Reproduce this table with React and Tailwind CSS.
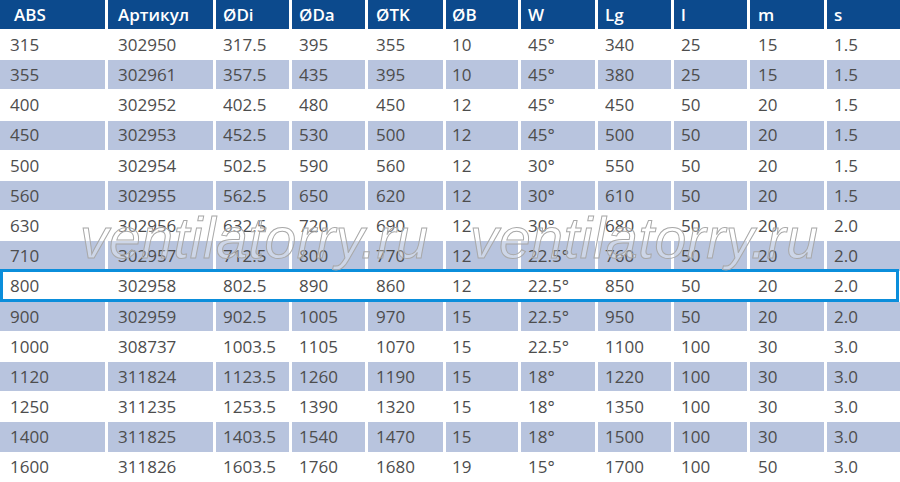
import React from "react";

const headers = ["ABS", "Артикул", "ØDi", "ØDa", "ØTK", "ØB", "W", "Lg", "l", "m", "s"];
const rows = [
  ["315", "302950", "317.5", "395", "355", "10", "45°", "340", "25", "15", "1.5"],
  ["355", "302961", "357.5", "435", "395", "10", "45°", "380", "25", "15", "1.5"],
  ["400", "302952", "402.5", "480", "450", "12", "45°", "450", "50", "20", "1.5"],
  ["450", "302953", "452.5", "530", "500", "12", "45°", "500", "50", "20", "1.5"],
  ["500", "302954", "502.5", "590", "560", "12", "30°", "550", "50", "20", "1.5"],
  ["560", "302955", "562.5", "650", "620", "12", "30°", "610", "50", "20", "1.5"],
  ["630", "302956", "632.5", "720", "690", "12", "30°", "680", "50", "20", "2.0"],
  ["710", "302957", "712.5", "800", "770", "12", "22.5°", "760", "50", "20", "2.0"],
  ["800", "302958", "802.5", "890", "860", "12", "22.5°", "850", "50", "20", "2.0"],
  ["900", "302959", "902.5", "1005", "970", "15", "22.5°", "950", "50", "20", "2.0"],
  ["1000", "308737", "1003.5", "1105", "1070", "15", "22.5°", "1100", "100", "30", "3.0"],
  ["1120", "311824", "1123.5", "1260", "1190", "15", "18°", "1220", "100", "30", "3.0"],
  ["1250", "311235", "1253.5", "1390", "1320", "15", "18°", "1350", "100", "30", "3.0"],
  ["1400", "311825", "1403.5", "1540", "1470", "15", "18°", "1500", "100", "30", "3.0"],
  ["1600", "311826", "1603.5", "1760", "1680", "19", "15°", "1700", "100", "50", "3.0"],
];

const pads = [
  "pl-[10px]", "pl-[10px]", "pl-[7px]", "pl-[7px]", "pl-[8px]", "pl-[6px]",
  "pl-[7px]", "pl-[7px]", "pl-[7px]", "pl-[8px]", "pl-[7px]",
];

const gridCls =
  "grid grid-cols-[105px_105px_73px_73px_75px_72px_74px_73px_73px_74px_1fr] gap-x-[3px]";

function Watermark({ className }) {
  return (
    <div
      className={
        "absolute whitespace-nowrap italic text-[57px] leading-none tracking-[0.5px] text-white/30 [-webkit-text-stroke:1px_#a8a8a8] font-['Liberation_Sans',sans-serif] " +
        className
      }
    >
      ventilatorry.ru
    </div>
  );
}

export default function App() {
  return (
    <div className="relative w-[900px] h-[482px] bg-white overflow-hidden font-['Open_Sans',sans-serif] text-[17px] text-[#4d4d4d]">
      <div className={gridCls + " h-[29px]"}>
        {headers.map((h, i) => (
          <div
            key={i}
            className={
              "bg-[#0c4a8d] text-white font-semibold flex items-center " +
              (i === 0 ? "pl-[14px]" : pads[i])
            }
          >
            {h}
          </div>
        ))}
      </div>
      <div className="flex flex-col gap-y-[1px] pt-[1px]">
        {rows.map((r, ri) => {
          const blue = ri % 2 === 1;
          return (
            <div key={ri} className={"relative " + gridCls + " h-[29.2px]"}>
              {r.map((c, ci) => (
                <div
                  key={ci}
                  className={
                    "flex items-center " + pads[ci] + (blue ? " bg-[#b8c4de]" : " bg-white")
                  }
                >
                  {c}
                </div>
              ))}
              {ri === 8 && (
                <div className="absolute left-0 right-px top-[-2.5px] bottom-[-1.5px] border-[3px] border-[#0b8edb] pointer-events-none" />
              )}
            </div>
          );
        })}
      </div>
      <Watermark className="left-[80px] top-[210px]" />
      <Watermark className="left-[470px] top-[210px]" />
    </div>
  );
}
